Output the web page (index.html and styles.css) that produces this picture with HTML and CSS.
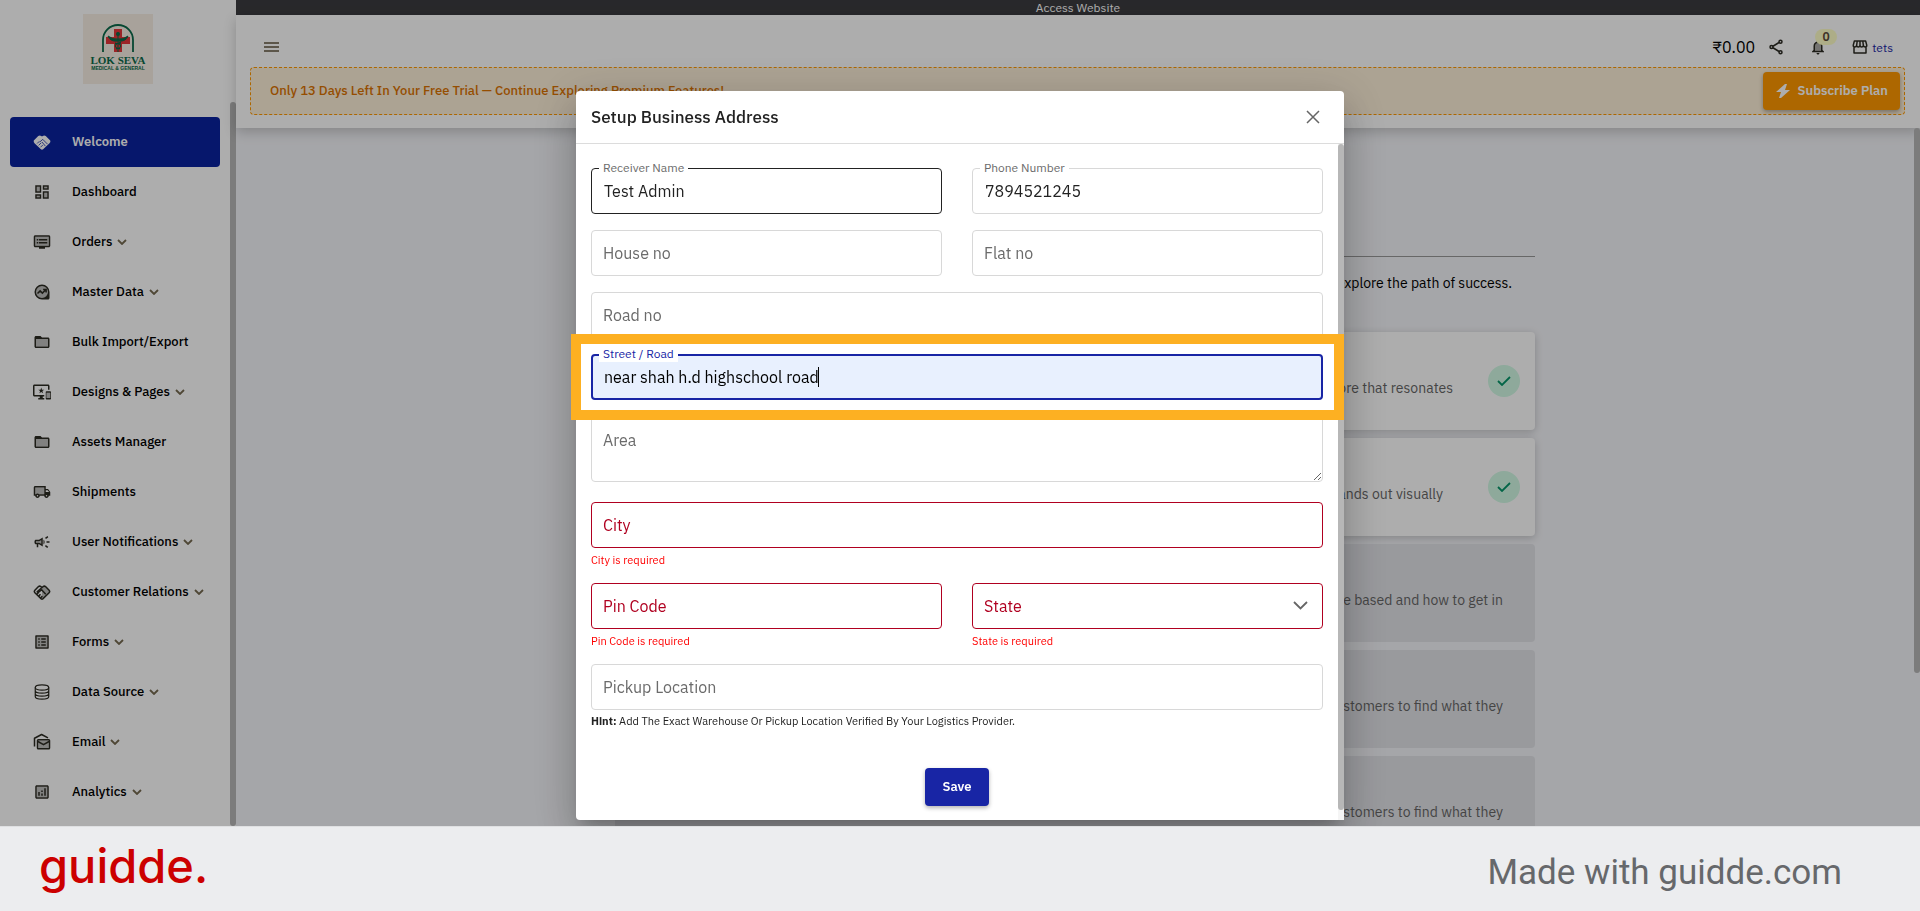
FILE: index.html
```
<!DOCTYPE html>
<html lang="en">
<head>
  <meta charset="utf-8">
  <meta name="viewport" content="width=device-width, initial-scale=1.0">
  <title>Setup Business Address</title>
  <link rel="stylesheet" href="styles.css">
</head>
<body>
  <!-- icon sprite -->
  <svg class="sprite" aria-hidden="true">
    <symbol id="i-handshake-solid" viewBox="0 0 24 24">
      <path d="M1 10 7 4q2-1.500 4 0l1 .8 1-.8q2-1.500 4 0l6 6q.8 2-1 3.500l-8.500 8.200q-1.500 1-3 0L2 13.500Q.5 12 1 10z"/>
      <path d="m9 12 4-3.500 6.500 6.500M5.500 14l3-3M7.500 16.500l3.500-3.500M10 19l3-3M12 12l4.500 5.500" fill="none" stroke="#0922a0" stroke-width="1"/>
    </symbol>
    <symbol id="i-dashboard" viewBox="0 0 24 24">
      <path opacity=".3" d="M5 5h4v6H5zm10 8h4v6h-4zM5 17h4v2H5zM15 5h4v2h-4z"/>
      <path d="M19 5v2h-4V5h4M9 5v6H5V5h4m10 8v6h-4v-6h4M9 17v2H5v-2h4M21 3h-8v6h8V3zM11 3H3v10h8V3zm10 8h-8v10h8V11zm-10 4H3v6h8v-6z"/>
    </symbol>
    <symbol id="i-orders" viewBox="0 0 24 24">
      <path opacity=".3" d="M3 5h18v12H3z"/>
      <path d="M21 3H3c-1.100 0-2 .9-2 2v12c0 1.100.9 2 2 2h5v2h8v-2h5c1.100 0 2-.9 2-2V5c0-1.100-.9-2-2-2zm0 14H3V5h18v12zm-2-9H8v2h11V8zm0 4H8v2h11v-2zM7 8H5v2h2V8zm0 4H5v2h2v-2z"/>
    </symbol>
    <symbol id="i-master" viewBox="0 0 24 24">
      <circle cx="12" cy="12" r="9" opacity=".3"/>
      <path d="M22 12v8c0 1.100-.9 2-2 2h-8a10 10 0 1 1 10-10zM12 4a8 8 0 1 0 0 16 8 8 0 0 0 0-16z"/>
      <path d="m6 14 3.500-3.500 3 3L17 9M13.500 8.500H17.500v4" fill="none" stroke="currentColor" stroke-width="2"/>
    </symbol>
    <symbol id="i-folder" viewBox="0 0 24 24">
      <path opacity=".3" d="M4 8h16v10H4z"/>
      <path d="M20 6h-8l-2-2H4c-1.100 0-2 .9-2 2v12c0 1.100.9 2 2 2h16c1.100 0 2-.9 2-2V8c0-1.100-.9-2-2-2zm0 12H4V8h16v10z"/>
    </symbol>
    <symbol id="i-devices" viewBox="0 0 24 24">
      <path opacity=".3" d="M18 13h5v7h-5z"/>
      <path d="M23 11h-5c-.55 0-1 .45-1 1v9c0 .55.45 1 1 1h5c.55 0 1-.45 1-1v-9c0-.55-.45-1-1-1zM23 20h-5v-7h5v7zM20 2H2C.89 2 0 2.890 0 4v12c0 1.100.89 2 2 2h7v2H7v2h8v-2h-2v-2h2v-2H2V4h18v5h2V4c0-1.110-.9-2-2-2zm-8.030 7L11 6l-.97 3H7l2.470 1.760-.94 2.910 2.470-1.800 2.470 1.800-.94-2.910L15 9h-3.030z"/>
    </symbol>
    <symbol id="i-truck" viewBox="0 0 24 24">
      <path opacity=".3" d="M3 6h12v9H3z"/>
      <path d="M20 8h-3V4H3c-1.100 0-2 .9-2 2v11h2c0 1.660 1.340 3 3 3s3-1.340 3-3h6c0 1.660 1.340 3 3 3s3-1.340 3-3h2v-5l-3-4zm-.5 1.500 1.960 2.500H17V9.500h2.500zM6 18c-.55 0-1-.45-1-1s.45-1 1-1 1 .45 1 1-.45 1-1 1zm2.220-3c-.55-.61-1.330-1-2.220-1s-1.670.39-2.220 1H3V6h12v9H8.220zM18 18c-.55 0-1-.45-1-1s.45-1 1-1 1 .45 1 1-.45 1-1 1z"/>
    </symbol>
    <symbol id="i-campaign" viewBox="0 0 24 24">
      <path opacity=".3" d="M4 11v2h5l2 1.500v-5L9 11z"/>
      <path d="M18 11v2h4v-2h-4zm-2 6.610c.96.71 2.210 1.650 3.200 2.390.4-.53.8-1.070 1.200-1.600-.99-.74-2.240-1.680-3.200-2.400-.4.54-.8 1.080-1.200 1.610zM20.400 5.600c-.4-.53-.8-1.070-1.200-1.600-.99.74-2.240 1.680-3.200 2.400.4.53.8 1.070 1.200 1.600.96-.72 2.210-1.650 3.200-2.400zM4 9c-1.100 0-2 .9-2 2v2c0 1.100.9 2 2 2h1v4h2v-4h1l5 3V6L8 9H4zm5.030 1.710L11 9.530v4.940l-1.970-1.180-.48-.29H4v-2h4.550l.48-.29zM15.500 12c0-1.330-.58-2.530-1.500-3.350v6.690c.92-.81 1.500-2.010 1.500-3.340z"/>
    </symbol>
    <symbol id="i-handshake" viewBox="0 0 24 24">
      <path opacity=".3" d="M12 6q3-3 5-1l5 5.500q.5 1.500-1 3L12 21z"/>
      <g fill="none" stroke="currentColor" stroke-width="2" stroke-linejoin="round">
        <path d="M2.500 13Q1 11.500 2.500 9.800L7 5q1.800-1.500 3.500-.3L12 6l1.500-1.300Q15.200 3.500 17 5l4.500 4.800Q23 11.500 21.500 13L13 21.200q-1 .8-2 0z"/>
        <path d="m17 15-5.500-6L8 12q-1.500 1-2.500-.3L12 6M5 15l2.500-2.500M7.500 17.500l2.500-2.500M10 20l2.500-2.500"/>
      </g>
    </symbol>
    <symbol id="i-forms" viewBox="0 0 24 24">
      <path opacity=".3" d="M5 5h14v14H5z"/>
      <path d="M11 7h6v2h-6zm0 4h6v2h-6zm0 4h6v2h-6zM7 7h2v2H7zm0 4h2v2H7zm0 4h2v2H7zM20.100 3H3.900c-.5 0-.9.4-.9.9v16.200c0 .4.4.9.9.9h16.200c.4 0 .9-.5.9-.9V3.900c0-.5-.5-.9-.9-.9zM19 19H5V5h14v14z"/>
    </symbol>
    <symbol id="i-database" viewBox="0 0 24 24">
      <g fill="none" stroke="currentColor" stroke-width="1.600">
        <ellipse cx="12" cy="6" rx="9" ry="3.600"/>
        <path d="M3 6v12c0 2 4 3.600 9 3.600s9-1.600 9-3.600V6M3 10c0 2 4 3.600 9 3.600s9-1.600 9-3.600M3 14c0 2 4 3.600 9 3.600s9-1.600 9-3.600"/>
      </g>
    </symbol>
    <symbol id="i-email" viewBox="0 0 24 24">
      <path opacity=".3" d="M7 10h14v11H7z"/>
      <g fill="none" stroke="currentColor" stroke-width="2" stroke-linejoin="round">
        <path d="M2 18V7l9.500-5L20 6.500"/>
        <rect x="6" y="9" width="16" height="12" rx="1"/>
        <path d="m6 11 8 4.500 8-4.500"/>
      </g>
    </symbol>
    <symbol id="i-analytics" viewBox="0 0 24 24">
      <path opacity=".3" d="M5 5h14v14H5z"/>
      <path d="M19 3H5c-1.100 0-2 .9-2 2v14c0 1.100.9 2 2 2h14c1.100 0 2-.9 2-2V5c0-1.100-.9-2-2-2zm0 16H5V5h14v14zM7 12h2v5H7zm8-5h2v10h-2zm-4 7h2v3h-2zm0-4h2v2h-2z"/>
    </symbol>
    <symbol id="i-chevron" viewBox="0 0 10 6">
      <path d="m1 1 4 4 4-4" fill="none" stroke="currentColor" stroke-width="1.800"/>
    </symbol>
    <symbol id="i-share" viewBox="0 0 24 24">
      <g fill="none" stroke="currentColor" stroke-width="2">
        <circle cx="18" cy="5" r="2"/><circle cx="6" cy="12" r="2"/><circle cx="18" cy="19" r="2"/>
        <path d="m8 11 8-5M8 13l8 5"/>
      </g>
    </symbol>
    <symbol id="i-bell" viewBox="0 0 24 24">
      <path opacity=".4" d="M12 6c-3 0-4 2.500-4 5v6h8v-6c0-2.500-1-5-4-5z"/>
      <path d="M12 22c1.100 0 2-.9 2-2h-4c0 1.100.9 2 2 2zm6-6v-5c0-3.070-1.630-5.640-4.500-6.320V4a1.500 1.500 0 0 0-3 0v.68C7.640 5.360 6 7.920 6 11v5l-2 2v1h16v-1l-2-2zm-2 1H8v-6c0-2.480 1.510-4.500 4-4.500s4 2.020 4 4.500v6z"/>
    </symbol>
    <symbol id="i-store" viewBox="0 0 24 24">
      <g fill="none" stroke="currentColor" stroke-width="2" stroke-linejoin="round">
        <path d="M4 12v8h16v-8M4.500 4h15L21 9.500q0 2.500-2 2.500T16.500 10q-.5 2-2.300 2T12 10q-.5 2-2.300 2T7.500 10q-.5 2-2.500 2T3 9.500zM7.500 10l.8-6M12 10V4M16.500 10l-.8-6"/>
      </g>
    </symbol>
    <symbol id="i-check" viewBox="0 0 14 10">
      <path d="m1 5 4 4 8-8" fill="none" stroke="currentColor" stroke-width="1.800"/>
    </symbol>
  </svg>

  <div class="screen">
    <aside class="sidebar">
      <svg class="brand" viewBox="0 0 70 70" role="img" aria-label="Lok Seva Medical and General">
        <rect width="70" height="70" fill="#f8efe5"/>
        <path d="M20 38V26a15 15 0 0 1 30 0v12" fill="none" stroke="#0b6a4a" stroke-width="1.800"/>
        <path d="M31 15h8v8h8v7h-8v8h-8v-8h-8v-7h8z" fill="#e5353a"/>
        <path d="M35 18v20M25 22q5 4 10 3 5 1 10-3-2 6-10 5-8 1-10-5zM32 29q6 1 6 3t-5 3M38 28q-6 2-6 4t5 3" fill="#0b6a4a" stroke="#0b6a4a" stroke-width="1"/>
        <circle cx="35" cy="20" r="2" fill="#0b6a4a"/>
        <text x="35" y="50" class="brand-name">LOK SEVA</text>
        <text x="35" y="56" class="brand-sub">MEDICAL &amp; GENERAL</text>
      </svg>
      <nav class="menu">
        <a class="menu-item active" href="#"><svg class="icon"><use href="#i-handshake-solid"/></svg>Welcome</a>
        <a class="menu-item" href="#"><svg class="icon"><use href="#i-dashboard"/></svg>Dashboard</a>
        <a class="menu-item" href="#"><svg class="icon"><use href="#i-orders"/></svg>Orders<svg class="chevron"><use href="#i-chevron"/></svg></a>
        <a class="menu-item" href="#"><svg class="icon"><use href="#i-master"/></svg>Master Data<svg class="chevron"><use href="#i-chevron"/></svg></a>
        <a class="menu-item" href="#"><svg class="icon"><use href="#i-folder"/></svg>Bulk Import/Export</a>
        <a class="menu-item" href="#"><svg class="icon"><use href="#i-devices"/></svg>Designs &amp; Pages<svg class="chevron"><use href="#i-chevron"/></svg></a>
        <a class="menu-item" href="#"><svg class="icon"><use href="#i-folder"/></svg>Assets Manager</a>
        <a class="menu-item" href="#"><svg class="icon"><use href="#i-truck"/></svg>Shipments</a>
        <a class="menu-item" href="#"><svg class="icon"><use href="#i-campaign"/></svg>User Notifications<svg class="chevron"><use href="#i-chevron"/></svg></a>
        <a class="menu-item" href="#"><svg class="icon"><use href="#i-handshake"/></svg>Customer Relations<svg class="chevron"><use href="#i-chevron"/></svg></a>
        <a class="menu-item" href="#"><svg class="icon"><use href="#i-forms"/></svg>Forms<svg class="chevron"><use href="#i-chevron"/></svg></a>
        <a class="menu-item" href="#"><svg class="icon"><use href="#i-database"/></svg>Data Source<svg class="chevron"><use href="#i-chevron"/></svg></a>
        <a class="menu-item" href="#"><svg class="icon"><use href="#i-email"/></svg>Email<svg class="chevron"><use href="#i-chevron"/></svg></a>
        <a class="menu-item" href="#"><svg class="icon"><use href="#i-analytics"/></svg>Analytics<svg class="chevron"><use href="#i-chevron"/></svg></a>
      </nav>
      <div class="scroll-thumb"></div>
    </aside>

    <main class="main">
      <div class="access-bar"><a href="#">Access Website</a></div>
      <header class="header">
        <div class="header-row">
          <button class="icon-btn" type="button" aria-label="Toggle menu">
            <svg class="burger" viewBox="0 0 15 10"><path d="M0 1h15M0 5h15M0 9h15" stroke="currentColor" stroke-width="1.500"/></svg>
          </button>
          <div class="header-tools">
            <span class="balance">₹0.00</span>
            <button class="icon-btn" type="button" aria-label="Share"><svg class="icon"><use href="#i-share"/></svg></button>
            <button class="icon-btn bell" type="button" aria-label="Notifications"><svg class="icon"><use href="#i-bell"/></svg><span class="badge">0</span></button>
            <a class="store" href="#"><svg class="icon"><use href="#i-store"/></svg>tets</a>
          </div>
        </div>
        <div class="trial">
          <span>Only 13 Days Left In Your Free Trial — Continue Exploring Premium Features!</span>
          <button class="subscribe" type="button">
            <svg class="bolt" viewBox="0 0 14 14"><path d="M9 0 0 8h5l-2 6h2l9-8H9l2-6z" fill="currentColor"/></svg>
            Subscribe Plan
          </button>
        </div>
      </header>

      <div class="content">
        <p class="intro">explore the path of success.</p>
        <div class="task done"><p>store that resonates</p><span class="tick"><svg><use href="#i-check"/></svg></span></div>
        <div class="task done short"><p>stands out visually</p><span class="tick"><svg><use href="#i-check"/></svg></span></div>
        <div class="task"><p>are based and how to get in</p></div>
        <div class="task"><p>customers to find what they</p></div>
        <div class="task"><p>customers to find what they</p></div>
      </div>
      <div class="scroll-thumb page-thumb"></div>
    </main>
  </div>

  <footer class="footer">
    <span class="guidde">guidde.</span>
    <span class="made">Made with guidde.com</span>
  </footer>

  <div class="scrim">
    <div class="modal" role="dialog" aria-labelledby="modal-title">
      <div class="modal-header">
        <h2 id="modal-title">Setup Business Address</h2>
        <button class="close" type="button" aria-label="Close">
          <svg viewBox="0 0 14 14"><path d="m1 1 12 12M13 1 1 13" stroke="currentColor" stroke-width="1.500"/></svg>
        </button>
      </div>
      <form class="modal-body">
        <div class="row">
          <div class="field filled hovered">
            <input type="text" id="receiver" value="Test Admin">
            <label for="receiver">Receiver Name</label>
          </div>
          <div class="field filled">
            <input type="text" id="phone" value="7894521245">
            <label for="phone">Phone Number</label>
          </div>
        </div>
        <div class="row">
          <div class="field">
            <input type="text" id="house">
            <label for="house">House no</label>
          </div>
          <div class="field">
            <input type="text" id="flat">
            <label for="flat">Flat no</label>
          </div>
        </div>
        <div class="field">
          <input type="text" id="road">
          <label for="road">Road no</label>
        </div>
        <div class="field filled focused">
          <input type="text" id="street" value="near shah h.d highschool road">
          <label for="street">Street / Road</label>
          <span class="caret"></span>
          <span class="highlight"></span>
        </div>
        <div class="field area">
          <textarea id="area"></textarea>
          <label for="area">Area</label>
        </div>
        <div class="group">
          <div class="field invalid">
            <input type="text" id="city">
            <label for="city">City</label>
          </div>
          <p class="error">City is required</p>
        </div>
        <div class="row">
          <div class="group">
            <div class="field invalid">
              <input type="text" id="pin">
              <label for="pin">Pin Code</label>
            </div>
            <p class="error">Pin Code is required</p>
          </div>
          <div class="group">
            <div class="field invalid">
              <select id="state"><option value=""></option></select>
              <label for="state">State</label>
              <svg class="arrow" viewBox="0 0 15 9"><path d="m1 1 6.500 6.500L14 1" fill="none" stroke="currentColor" stroke-width="1.800"/></svg>
            </div>
            <p class="error">State is required</p>
          </div>
        </div>
        <div class="group">
          <div class="field">
            <input type="text" id="pickup">
            <label for="pickup">Pickup Location</label>
          </div>
          <p class="hint"><b>Hint:</b> Add The Exact Warehouse Or Pickup Location Verified By Your Logistics Provider.</p>
        </div>
        <div class="actions">
          <button class="save" type="submit">Save</button>
        </div>
        <div class="modal-track"><div class="modal-thumb"></div></div>
      </form>
    </div>
  </div>
</body>
</html>
```
FILE: styles.css
```
* {
  box-sizing: border-box;
}

body {
  margin: 0;
  height: 100vh;
  overflow: hidden;
  display: flex;
  flex-direction: column;
  font-family: "IBM Plex Sans", "Noto Sans", sans-serif;
  font-size: 13px;
  color: #000;
}

p, h2 {
  margin: 0;
}

a {
  color: inherit;
  text-decoration: none;
}

button, input, select, textarea {
  font-family: inherit;
}

.sprite {
  position: absolute;
  width: 0;
  height: 0;
}

.icon {
  width: 18px;
  height: 18px;
  fill: currentColor;
}

.screen {
  flex: 1;
  min-height: 0;
  display: flex;
  overflow: hidden;
  background-color: #f4f5f9;
}

/* sidebar */
.sidebar {
  position: relative;
  width: 236px;
  flex-shrink: 0;
  background-color: #fff;
}

.brand {
  display: block;
  width: 70px;
  height: 70px;
  margin: 14px auto 33px;
}

.brand-name {
  font: bold 11px "Liberation Serif", serif;
  text-anchor: middle;
  fill: #0b6a4a;
}

.brand-sub {
  font: bold 5px "Liberation Sans", sans-serif;
  text-anchor: middle;
  fill: #0b6a4a;
}

.menu {
  padding: 0 16px 0 10px;
}

.menu-item {
  display: flex;
  align-items: center;
  height: 50px;
  padding: 0 0 2px 23px;
  border-radius: 4px;
  font-weight: 500;
}

.menu-item svg {
  margin-top: 2px;
}

.menu-item .icon {
  margin-right: 21px;
  color: #2c2b23;
}

.menu-item.active {
  background-color: #0922a0;
  color: #fff;
  font-weight: 600;
}

.menu-item.active .icon {
  color: #fff;
}

.chevron {
  width: 10px;
  height: 6px;
  margin-left: 5px;
  color: #75694f;
}

.scroll-thumb {
  position: absolute;
  top: 102px;
  right: 0;
  bottom: 0;
  width: 6px;
  border-radius: 3px;
  background-color: #b7b7b7;
}

/* main area */
.main {
  position: relative;
  flex: 1;
  min-width: 0;
}

.access-bar {
  height: 15px;
  background-color: #3c3c40;
  color: #fff;
  font-size: 12px;
  line-height: 15px;
  text-align: center;
}

.header {
  padding: 12px 15px 13px 14px;
  background-color: #fff;
  box-shadow: 0 4px 12px rgba(0, 0, 0, 0.2);
}

.header-row {
  display: flex;
  align-items: center;
  justify-content: space-between;
  height: 40px;
  padding: 0 12px 0 14px;
}

.icon-btn {
  position: relative;
  display: flex;
  padding: 0;
  border: 0;
  background: none;
  color: #2c2b23;
}

.burger {
  width: 15px;
  height: 10px;
  color: #62563f;
}

.header-tools {
  display: flex;
  align-items: center;
}

.balance {
  margin-right: 12px;
  font-size: 16px;
}

.bell {
  margin: 0 24px;
}

.badge {
  position: absolute;
  top: -9px;
  left: 6px;
  width: 22px;
  height: 16px;
  border-radius: 8px;
  background-color: #ffffc8;
  color: #5c4a3a;
  font-size: 12px;
  font-weight: 600;
  line-height: 16px;
  text-align: center;
}

.store {
  display: flex;
  align-items: center;
  gap: 3px;
  color: #1825a5;
  font-size: 12px;
}

.store .icon {
  color: #2c2b23;
}

.trial {
  display: flex;
  align-items: center;
  justify-content: space-between;
  height: 48px;
  padding: 0 4px 0 19px;
  border: 1px dashed #f90;
  border-radius: 4px;
  background-color: #fef0d9;
  color: #dc7300;
}

.trial span {
  padding-bottom: 2px;
  font-weight: 500;
}

.subscribe {
  display: flex;
  align-items: center;
  gap: 8px;
  height: 38px;
  padding: 0 12px 2px 13px;
  border: 0;
  border-radius: 4px;
  background-color: #f90;
  box-shadow: 0 2px 4px rgba(0, 0, 0, 0.3);
  color: #fff;
  font-size: 13px;
  font-weight: 600;
}

.bolt {
  width: 14px;
  height: 14px;
  margin-top: 2px;
}

.content {
  max-width: 926px;
  margin: 0 auto;
  padding: 128px 6px 0 0;
}

.intro {
  height: 76px;
  padding: 16px 23px 0 0;
  border-top: 1px solid #999;
  font-size: 14px;
  line-height: 20px;
  text-align: right;
}

.task {
  display: flex;
  align-items: center;
  justify-content: flex-end;
  height: 98px;
  margin-bottom: 8px;
  padding-right: 32px;
  border-radius: 4px;
  background-color: #e2e3e8;
  color: #666;
  font-size: 14px;
}

.task p {
  padding-top: 14px;
}

.task.done {
  gap: 35px;
  padding-right: 15px;
  background-color: #fff;
  box-shadow: 0 2px 8px rgba(0, 0, 0, 0.2);
}

.task.short {
  gap: 45px;
}

.tick {
  display: flex;
  align-items: center;
  justify-content: center;
  width: 32px;
  height: 32px;
  border-radius: 50%;
  background-color: #d1fae5;
  color: #059669;
}

.tick svg {
  width: 14px;
  height: 10px;
}

.page-thumb {
  top: 128px;
  bottom: 153px;
}

/* bottom strip */
.footer {
  position: relative;
  z-index: 3;
  display: flex;
  align-items: center;
  justify-content: space-between;
  height: 85px;
  padding: 0 78px 0 39px;
  border-top: 1px solid #dfe0e2;
  background-color: #ecedef;
}

.guidde {
  padding-bottom: 6px;
  font-family: Inter, sans-serif;
  font-size: 47px;
  font-weight: 500;
  line-height: 60px;
  color: #c00;
}

.made {
  padding-top: 6px;
  font-family: Roboto, sans-serif;
  font-size: 35px;
  color: #66686b;
}

/* modal */
.scrim {
  position: fixed;
  inset: 0;
  z-index: 2;
  display: flex;
  align-items: center;
  justify-content: center;
  background-color: rgba(0, 0, 0, 0.32);
}

.modal {
  display: flex;
  flex-direction: column;
  width: 40%;
  height: 80vh;
  border-radius: 4px;
  background-color: #fff;
  box-shadow: 0 11px 15px -7px rgba(0, 0, 0, 0.2), 0 24px 38px 3px rgba(0, 0, 0, 0.14), 0 9px 46px 8px rgba(0, 0, 0, 0.12);
}

.modal-header {
  display: flex;
  align-items: center;
  justify-content: space-between;
  height: 53px;
  padding: 0 24px 0 15px;
  border-bottom: 1px solid #dcdcdc;
}

.modal-header h2 {
  font-size: 17px;
  font-weight: 500;
  color: #222;
}

.close {
  display: flex;
  padding: 0;
  border: 0;
  background: none;
  color: #666;
}

.close svg {
  width: 14px;
  height: 14px;
}

.modal-body {
  position: relative;
  flex: 1;
  padding: 24px 21px 0 15px;
}

.modal-track {
  position: absolute;
  top: 0;
  right: 0;
  bottom: 0;
  width: 6px;
  padding-bottom: 10px;
  background-color: #f5f5f5;
}

.modal-thumb {
  height: 100%;
  border-radius: 3px;
  background-color: #b7b7b7;
}

.row {
  display: grid;
  grid-template-columns: 1fr 1fr;
  gap: 30px;
}

.field {
  position: relative;
  height: 46px;
  margin-bottom: 16px;
}

.field input,
.field select,
.field textarea {
  display: block;
  width: 100%;
  height: 100%;
  padding: 0 12px;
  border: 1px solid #d8d8d8;
  border-radius: 4px;
  outline: none;
  background-color: #fff;
  color: #222;
  font-size: 16px;
  appearance: none;
}

.field label {
  position: absolute;
  top: 12px;
  left: 12px;
  color: #6b6b6b;
  font-size: 16px;
  line-height: 22px;
  pointer-events: none;
}

.field.filled label {
  top: -8px;
  left: 8px;
  padding: 0 4px;
  background-color: #fff;
  font-size: 12px;
  line-height: 16px;
}

.field.hovered input {
  border-color: #222;
}

.field.focused input {
  padding: 0 11px;
  border: 2px solid #1825a5;
  background-color: #e8f0fe;
  color: #000;
}

.field.focused label {
  color: #1825a5;
}

.caret {
  position: absolute;
  top: 13px;
  left: 227px;
  width: 1px;
  height: 20px;
  background-color: #000;
}

.highlight {
  position: absolute;
  inset: -20px -21px -20px -20px;
  z-index: 1;
  border: 10px solid #fdb022;
  pointer-events: none;
}

.field.area {
  height: 66px;
  margin-bottom: 20px;
}

.field.area label {
  line-height: 24px;
}

.group {
  margin-bottom: 16px;
}

.group .field {
  margin-bottom: 0;
}

.field.invalid input,
.field.invalid select {
  border-color: #b00020;
}

.field.invalid label {
  color: #b00020;
}

.arrow {
  position: absolute;
  top: 18px;
  right: 15px;
  width: 15px;
  height: 9px;
  color: #666;
}

.error {
  padding-top: 5px;
  color: #f00;
  font-size: 11px;
  line-height: 14px;
}

.hint {
  padding-top: 4px;
  color: #222;
  font-size: 11px;
  line-height: 15px;
}

.actions {
  display: flex;
  justify-content: center;
  padding-top: 23px;
}

.save {
  width: 64px;
  height: 38px;
  padding: 0 0 2px;
  border: 0;
  border-radius: 4px;
  background-color: #1825a5;
  box-shadow: 0 2px 4px rgba(0, 0, 0, 0.3);
  color: #fff;
  font-size: 13px;
  font-weight: 600;
}
```
